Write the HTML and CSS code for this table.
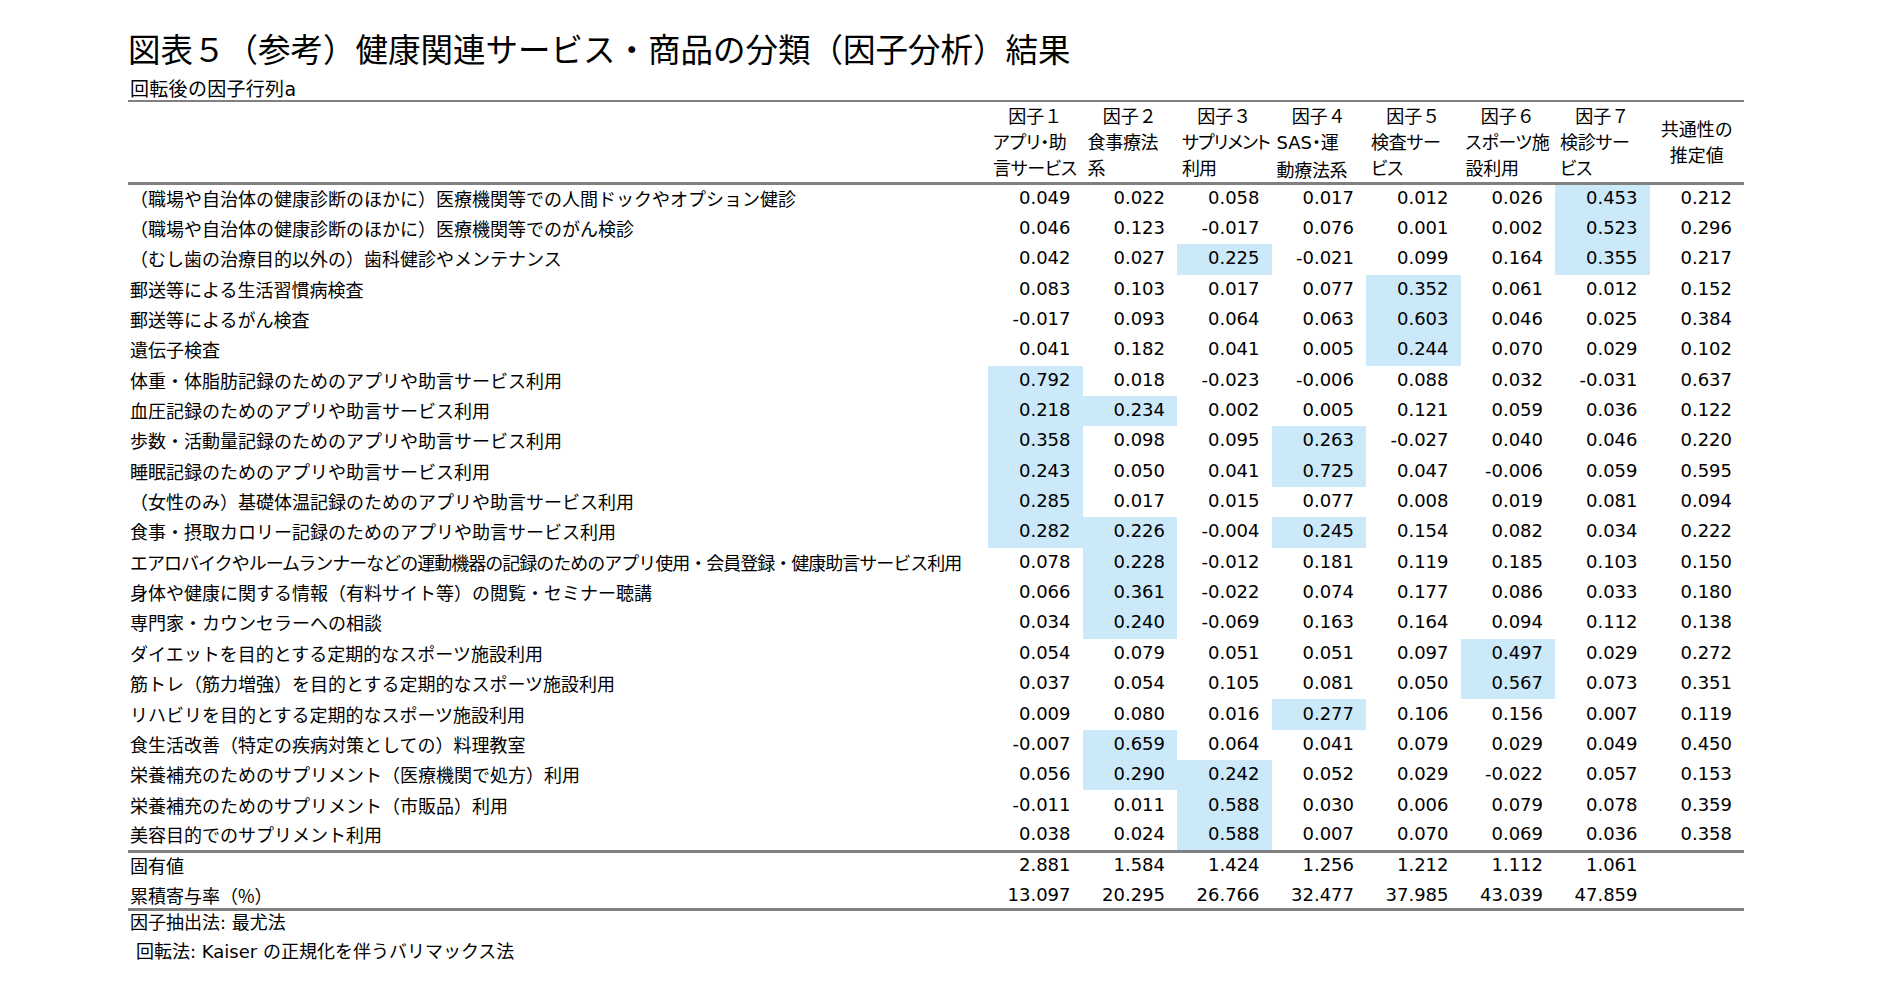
FILE: index.html
```html
<!DOCTYPE html>
<html lang="ja">
<head>
<meta charset="utf-8">
<title>図表５（参考）健康関連サービス・商品の分類（因子分析）結果</title>
<link rel="stylesheet" href="styles.css">
</head>
<body>
<div class="doc">
  <h1 class="title">図表５（参考）健康関連サービス・商品の分類（因子分析）結果</h1>
  <div class="subtitle">回転後の因子行列a</div>
  <table class="matrix">
    <colgroup>
      <col class="c-label">
      <col class="c-num"><col class="c-num"><col class="c-num"><col class="c-num">
      <col class="c-num"><col class="c-num"><col class="c-num"><col class="c-num">
    </colgroup>
    <thead>
      <tr class="h-top">
        <th rowspan="2"></th>
        <th>因子１</th><th>因子２</th><th>因子３</th><th>因子４</th>
        <th>因子５</th><th>因子６</th><th>因子７</th>
        <th rowspan="2" class="comm">共通性の<br>推定値</th>
      </tr>
      <tr class="h-sub">
        <th>アプリ・助<br>言サービス</th>
        <th>食事療法<br>系</th>
        <th class="narrow">サプリメント<br>利用</th>
        <th><span class="lat">SAS</span>・運<br>動療法系</th>
        <th>検査サー<br>ビス</th>
        <th>スポーツ施<br>設利用</th>
        <th>検診サー<br>ビス</th>
      </tr>
    </thead>
    <tbody class="data">
      <tr><td class="label">（職場や自治体の健康診断のほかに）医療機関等での人間ドックやオプション健診</td><td>0.049</td><td>0.022</td><td>0.058</td><td>0.017</td><td>0.012</td><td>0.026</td><td class="hl">0.453</td><td>0.212</td></tr>
      <tr><td class="label">（職場や自治体の健康診断のほかに）医療機関等でのがん検診</td><td>0.046</td><td>0.123</td><td>-0.017</td><td>0.076</td><td>0.001</td><td>0.002</td><td class="hl">0.523</td><td>0.296</td></tr>
      <tr><td class="label">（むし歯の治療目的以外の）歯科健診やメンテナンス</td><td>0.042</td><td>0.027</td><td class="hl">0.225</td><td>-0.021</td><td>0.099</td><td>0.164</td><td class="hl">0.355</td><td>0.217</td></tr>
      <tr><td class="label">郵送等による生活習慣病検査</td><td>0.083</td><td>0.103</td><td>0.017</td><td>0.077</td><td class="hl">0.352</td><td>0.061</td><td>0.012</td><td>0.152</td></tr>
      <tr><td class="label">郵送等によるがん検査</td><td>-0.017</td><td>0.093</td><td>0.064</td><td>0.063</td><td class="hl">0.603</td><td>0.046</td><td>0.025</td><td>0.384</td></tr>
      <tr><td class="label">遺伝子検査</td><td>0.041</td><td>0.182</td><td>0.041</td><td>0.005</td><td class="hl">0.244</td><td>0.070</td><td>0.029</td><td>0.102</td></tr>
      <tr><td class="label">体重・体脂肪記録のためのアプリや助言サービス利用</td><td class="hl">0.792</td><td>0.018</td><td>-0.023</td><td>-0.006</td><td>0.088</td><td>0.032</td><td>-0.031</td><td>0.637</td></tr>
      <tr><td class="label">血圧記録のためのアプリや助言サービス利用</td><td class="hl">0.218</td><td class="hl">0.234</td><td>0.002</td><td>0.005</td><td>0.121</td><td>0.059</td><td>0.036</td><td>0.122</td></tr>
      <tr><td class="label">歩数・活動量記録のためのアプリや助言サービス利用</td><td class="hl">0.358</td><td>0.098</td><td>0.095</td><td class="hl">0.263</td><td>-0.027</td><td>0.040</td><td>0.046</td><td>0.220</td></tr>
      <tr><td class="label">睡眠記録のためのアプリや助言サービス利用</td><td class="hl">0.243</td><td>0.050</td><td>0.041</td><td class="hl">0.725</td><td>0.047</td><td>-0.006</td><td>0.059</td><td>0.595</td></tr>
      <tr><td class="label">（女性のみ）基礎体温記録のためのアプリや助言サービス利用</td><td class="hl">0.285</td><td>0.017</td><td>0.015</td><td>0.077</td><td>0.008</td><td>0.019</td><td>0.081</td><td>0.094</td></tr>
      <tr><td class="label">食事・摂取カロリー記録のためのアプリや助言サービス利用</td><td class="hl">0.282</td><td class="hl">0.226</td><td>-0.004</td><td class="hl">0.245</td><td>0.154</td><td>0.082</td><td>0.034</td><td>0.222</td></tr>
      <tr><td class="label tight">エアロバイクやルームランナーなどの運動機器の記録のためのアプリ使用・会員登録・健康助言サービス利用</td><td>0.078</td><td class="hl">0.228</td><td>-0.012</td><td>0.181</td><td>0.119</td><td>0.185</td><td>0.103</td><td>0.150</td></tr>
      <tr><td class="label">身体や健康に関する情報（有料サイト等）の閲覧・セミナー聴講</td><td>0.066</td><td class="hl">0.361</td><td>-0.022</td><td>0.074</td><td>0.177</td><td>0.086</td><td>0.033</td><td>0.180</td></tr>
      <tr><td class="label">専門家・カウンセラーへの相談</td><td>0.034</td><td class="hl">0.240</td><td>-0.069</td><td>0.163</td><td>0.164</td><td>0.094</td><td>0.112</td><td>0.138</td></tr>
      <tr><td class="label">ダイエットを目的とする定期的なスポーツ施設利用</td><td>0.054</td><td>0.079</td><td>0.051</td><td>0.051</td><td>0.097</td><td class="hl">0.497</td><td>0.029</td><td>0.272</td></tr>
      <tr><td class="label">筋トレ（筋力増強）を目的とする定期的なスポーツ施設利用</td><td>0.037</td><td>0.054</td><td>0.105</td><td>0.081</td><td>0.050</td><td class="hl">0.567</td><td>0.073</td><td>0.351</td></tr>
      <tr><td class="label">リハビリを目的とする定期的なスポーツ施設利用</td><td>0.009</td><td>0.080</td><td>0.016</td><td class="hl">0.277</td><td>0.106</td><td>0.156</td><td>0.007</td><td>0.119</td></tr>
      <tr><td class="label">食生活改善（特定の疾病対策としての）料理教室</td><td>-0.007</td><td class="hl">0.659</td><td>0.064</td><td>0.041</td><td>0.079</td><td>0.029</td><td>0.049</td><td>0.450</td></tr>
      <tr><td class="label">栄養補充のためのサプリメント（医療機関で処方）利用</td><td>0.056</td><td class="hl">0.290</td><td class="hl">0.242</td><td>0.052</td><td>0.029</td><td>-0.022</td><td>0.057</td><td>0.153</td></tr>
      <tr><td class="label">栄養補充のためのサプリメント（市販品）利用</td><td>-0.011</td><td>0.011</td><td class="hl">0.588</td><td>0.030</td><td>0.006</td><td>0.079</td><td>0.078</td><td>0.359</td></tr>
      <tr><td class="label">美容目的でのサプリメント利用</td><td>0.038</td><td>0.024</td><td class="hl">0.588</td><td>0.007</td><td>0.070</td><td>0.069</td><td>0.036</td><td>0.358</td></tr>
    </tbody>
    <tbody class="summary">
      <tr class="s1"><td class="label">固有値</td><td>2.881</td><td>1.584</td><td>1.424</td><td>1.256</td><td>1.212</td><td>1.112</td><td>1.061</td><td></td></tr>
      <tr class="s2"><td class="label">累積寄与率（%）</td><td>13.097</td><td>20.295</td><td>26.766</td><td>32.477</td><td>37.985</td><td>43.039</td><td>47.859</td><td></td></tr>
    </tbody>
  </table>
  <div class="notes">
    <p class="note">因子抽出法: 最尤法</p>
    <p class="note indent">回転法: Kaiser の正規化を伴うバリマックス法</p>
  </div>
</div>
</body>
</html>
```
FILE: styles.css
```css
html, body {
  margin: 0;
  padding: 0;
  background: #ffffff;
}

body {
  font-family: "DejaVu Sans", "Noto Sans CJK JP", sans-serif;
  color: #000000;
}

.doc {
  margin-left: 128px;
  width: 1616px;
}

.title {
  margin: 0;
  padding-top: 27px;
  font-family: "Noto Sans CJK JP", sans-serif;
  font-size: 32.5px;
  font-weight: 400;
  line-height: 41px;
  white-space: nowrap;
}

.subtitle {
  margin-top: 10px;
  padding-left: 2px;
  font-size: 19px;
  line-height: 22px;
  height: 22px;
  letter-spacing: 0.3px;
}

.matrix {
  width: 1616px;
  border-collapse: collapse;
  table-layout: fixed;
  border-top: 2px solid #808080;
  border-bottom: 3px solid #808080;
}

.c-label { width: 860px; }
.c-num { width: 94.5px; }

.matrix th {
  font-weight: 400;
  font-size: 18px;
  font-family: "Noto Sans CJK JP", sans-serif;
  padding: 0;
  white-space: nowrap;
}

.matrix thead {
  border-bottom: 3px solid #808080;
}

.h-top th {
  height: 26px;
  line-height: 26px;
  text-align: center;
  vertical-align: middle;
}

.h-sub th {
  height: 50px;
  line-height: 26px;
  text-align: left;
  vertical-align: top;
  padding-left: 5px;
  font-feature-settings: "palt";
  letter-spacing: -0.3px;
}

.h-sub th.narrow {
  letter-spacing: -1px;
}

.h-top th.comm {
  line-height: 26px;
  text-align: center;
  vertical-align: middle;
  padding-bottom: 2px;
}

.lat {
  font-family: "DejaVu Sans", sans-serif;
  letter-spacing: 0;
}

.matrix td {
  padding: 0 12px 0 0;
  font-size: 18px;
  line-height: 22px;
  text-align: right;
  vertical-align: middle;
  white-space: nowrap;
}

.matrix td.label {
  padding: 0 0 0 2px;
  text-align: left;
  font-family: "Noto Sans CJK JP", sans-serif;
}

.matrix .data td {
  padding-bottom: 2px;
}

.matrix td.label.tight {
  letter-spacing: -1px;
}

.data tr {
  height: 30.35px;
}

.summary {
  border-top: 3px solid #808080;
}

.summary tr.s1 {
  height: 29px;
}

.summary tr.s1 td {
  padding-bottom: 3px;
}

.summary tr.s2 {
  height: 29px;
}

.summary tr.s2 td {
  padding-top: 2px;
}

.matrix td.hl {
  background: #cce9fa;
}

.notes {
  margin-top: -3px;
}

.note {
  margin: 0;
  padding-left: 2px;
  font-size: 18px;
  line-height: 29px;
  white-space: nowrap;
}

.note.indent {
  padding-left: 8px;
}
```
